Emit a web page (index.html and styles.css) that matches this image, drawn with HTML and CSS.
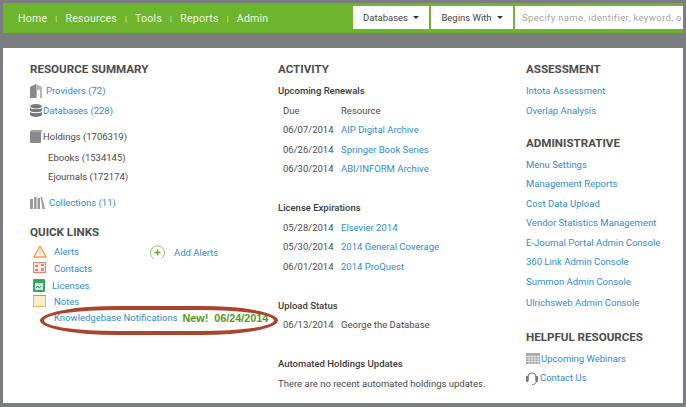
FILE: index.html
```html
<!DOCTYPE html>
<html lang="en">
<head>
    <meta charset="UTF-8">
    <title>Dashboard</title>
    <link rel="stylesheet" href="styles.css">
</head>
<body>
    <div class="frame">
        <header class="topbar">
            <nav class="nav">
                <a>Home</a><span class="sep">|</span>
                <a>Resources</a><span class="sep">|</span>
                <a>Tools</a><span class="sep">|</span>
                <a>Reports</a><span class="sep">|</span>
                <a>Admin</a>
            </nav>
            <div class="search">
                <div class="select select-db">Databases <i class="caret"></i></div>
                <div class="select select-match">Begins With <i class="caret"></i></div>
                <div class="search-input">Specify name, identifier, keyword, o</div>
            </div>
        </header>
        <div class="subbar"></div>
        <main class="content">
            <section class="column">
                <h2>RESOURCE SUMMARY</h2>
                <div class="row row-first">
                    <svg class="icon" width="13" height="14" viewBox="0 0 13 14"><path d="M0 14V3l6-3v14z" fill="#8a8a8a"/><path d="M6 0l6 3v11h-2V7a1.500 1.500 0 0 0-3 0v7H6z" fill="#b5b5b5"/></svg>
                    <a class="icon-gap">Providers (72)</a>
                </div>
                <div class="row">
                    <svg class="icon" width="12" height="13" viewBox="0 0 12 13"><ellipse cx="6" cy="2.200" rx="6" ry="2.200" fill="#777"/><path d="M0 4c1 1.600 11 1.600 12 0v2.500c-1 2.300-11 2.300-12 0zM0 8c1 1.600 11 1.600 12 0v2.800c-1 2.800-11 2.800-12 0z" fill="#777"/></svg>
                    <a>Databases (228)</a>
                </div>
                <div class="row row-holdings">
                    <svg class="icon" width="12" height="13" viewBox="0 0 12 13"><rect y="1" width="11" height="12" rx="1" fill="#8a8a8a"/><rect x="1" width="11" height="2" fill="#a5a5a5"/></svg>
                    <span>Holdings (1706319)</span>
                </div>
                <div class="row row-sub row-ebooks">Ebooks (1534145)</div>
                <div class="row row-sub">Ejournals (172174)</div>
                <div class="row row-collections">
                    <svg class="icon" width="15" height="12" viewBox="0 0 15 12"><path d="M0 2h3v10H0zM4 0h2.500v12H4zM7.500 1H10v11H7.500zM10.500 0l1.500 0L15 12h-2.500z" fill="#9a9a9a"/></svg>
                    <a class="collections">Collections (11)</a>
                </div>
                <h2 class="quick-title">QUICK LINKS</h2>
                <div class="quick">
                    <div class="quick-list">
                        <div class="quick-row">
                            <svg class="quick-icon" width="14" height="13" viewBox="0 0 14 13"><path d="M7 1 1 12h12z" fill="#fff" stroke="#f2a04e" stroke-width="1.500"/><path d="M7 5v4M7 10v1" stroke="#f2a04e"/></svg>
                            <a>Alerts</a>
                        </div>
                        <div class="quick-row">
                            <svg class="quick-icon" width="14" height="12" viewBox="0 0 14 12"><rect x=".5" y=".5" width="12" height="10" fill="#fbeae4" stroke="#e8836c"/><path d="M2 3h3v2H2zM8 2h3v2H8zM2 7h3v2H2zM8 6h3v3H8z" fill="#e8836c"/></svg>
                            <a>Contacts</a>
                        </div>
                        <div class="quick-row quick-licenses">
                            <svg class="quick-icon" width="12" height="13" viewBox="0 0 12 13"><rect width="12" height="13" rx="1" fill="#3ba568"/><rect x="2" y="4" width="8" height="7" fill="#cfe6d6"/><path d="M3 9l2-2 1 2 2-2" stroke="#3ba568" fill="none"/></svg>
                            <a>Licenses</a>
                        </div>
                        <div class="quick-row quick-notes">
                            <svg class="quick-icon" width="13" height="12" viewBox="0 0 13 12"><rect x=".5" y=".5" width="12" height="11" fill="#fbeec4" stroke="#f0b565"/><path d="M0 .5h13" stroke="#e8902c"/></svg>
                            <a>Notes</a>
                        </div>
                        <div class="quick-row kb">
                            <a>Knowledgebase Notifications</a>
                            <b class="new">New!&nbsp; 06/24/2014</b>
                        </div>
                    </div>
                    <div class="add-alerts">
                        <svg width="15" height="15" viewBox="0 0 15 15"><path d="M3.500 13.500a7 7 0 1 1 8 0" fill="none" stroke="#8cc063"/><path d="M7.500 4.500v6M4.500 7.500h6" stroke="#5fa52e" stroke-width="1.400"/></svg>
                        <a>Add Alerts</a>
                    </div>
                </div>
            </section>
            <section class="column">
                <h2>ACTIVITY</h2>
                <h3 class="row-first">Upcoming Renewals</h3>
                <div class="table-row head"><span class="cell-date">Due</span><span>Resource</span></div>
                <div class="table-row first-data"><span class="cell-date">06/07/2014</span><a>AIP Digital Archive</a></div>
                <div class="table-row"><span class="cell-date">06/26/2014</span><a>Springer Book Series</a></div>
                <div class="table-row"><span class="cell-date">06/30/2014</span><a>ABI/INFORM Archive</a></div>
                <h3 class="block-title">License Expirations</h3>
                <div class="table-row"><span class="cell-date">05/28/2014</span><a>Elsevier 2014</a></div>
                <div class="table-row"><span class="cell-date">05/30/2014</span><a>2014 General Coverage</a></div>
                <div class="table-row"><span class="cell-date">06/01/2014</span><a>2014 ProQuest</a></div>
                <h3 class="block-title">Upload Status</h3>
                <div class="table-row"><span class="cell-date">06/13/2014</span><span>George the Database</span></div>
                <h3 class="block-title">Automated Holdings Updates</h3>
                <p class="note">There are no recent automated holdings updates.</p>
            </section>
            <section class="column">
                <h2>ASSESSMENT</h2>
                <div class="row row-first"><a>Intota Assessment</a></div>
                <div class="row"><a>Overlap Analysis</a></div>
                <h2 class="admin-title">ADMINISTRATIVE</h2>
                <div class="row row-first"><a>Menu Settings</a></div>
                <div class="row"><a>Management Reports</a></div>
                <div class="row"><a>Cost Data Upload</a></div>
                <div class="row"><a>Vendor Statistics Management</a></div>
                <div class="row"><a>E-Journal Portal Admin Console</a></div>
                <div class="row"><a>360 Link Admin Console</a></div>
                <div class="row"><a>Summon Admin Console</a></div>
                <div class="row row-last"><a>Ulrichsweb Admin Console</a></div>
                <h2 class="helpful-title">HELPFUL RESOURCES</h2>
                <div class="row row-webinars">
                    <svg class="icon" width="14" height="11" viewBox="0 0 14 11"><rect width="14" height="11" fill="#a8a8a8"/><path d="M0 3.500h14M0 6h14M0 8.500h14M3 2v9M6 2v9M9 2v9M12 2v9" stroke="#efefef" stroke-width=".7"/></svg>
                    <a>Upcoming Webinars</a>
                </div>
                <div class="row">
                    <svg class="icon" width="12" height="13" viewBox="0 0 12 13"><path d="M2 8V5a4 4 0 0 1 8 0v3" fill="none" stroke="#777" stroke-width="1.200"/><rect x="0" y="4" width="2.500" height="6" rx="1" fill="#777"/><rect x="9.500" y="4" width="2.500" height="6" rx="1" fill="#777"/><path d="M10 10c0 2-2 2.500-4 2.500" fill="none" stroke="#777"/></svg>
                    <a class="contact">Contact Us</a>
                </div>
            </section>
            <div class="circle"></div>
        </main>
    </div>
</body>
</html>
```

FILE: styles.css
```css
* {
    box-sizing: border-box;
}

body {
    margin: 0;
    background-color: #7c7d80;
    font-family: Roboto, "Liberation Sans", sans-serif;
    font-size: 9.5px;
    color: #4a4a4a;
}

a {
    color: #2f8ccd;
}

.frame {
    width: 686px;
    height: 407px;
    padding: 3px 3px 4px 3px;
    overflow: hidden;
}

.topbar {
    display: flex;
    justify-content: space-between;
    align-items: center;
    height: 30px;
    background-color: #6cb52d;
}

.nav {
    display: flex;
    align-items: center;
    padding-left: 15px;
    font-size: 10.5px;
    letter-spacing: 0.25px;
}

.nav a {
    color: #eef7e6;
}

.sep {
    margin: 0 8px 0 8px;
    color: #dcefc9;
    font-size: 8px;
}

.search {
    display: flex;
    gap: 2px;
    margin-bottom: 1px;
}

.select {
    display: flex;
    align-items: center;
    justify-content: center;
    gap: 5px;
    height: 23px;
    background-color: #fff;
    color: #444;
}

.select-db {
    width: 76px;
}

.select-match {
    width: 82px;
}

.caret {
    border-left: 3px solid transparent;
    border-right: 3px solid transparent;
    border-top: 3px solid #333;
}

.search-input {
    width: 168px;
    height: 23px;
    line-height: 23px;
    padding-left: 7px;
    background-color: #fff;
    color: #a5a5a5;
    letter-spacing: 0.35px;
    white-space: nowrap;
    overflow: hidden;
}

.subbar {
    height: 15px;
}

.content {
    position: relative;
    display: grid;
    grid-template-columns: 248px 248px 1fr;
    height: 355px;
    padding: 14px 0 0 27px;
    background-color: #fff;
}

h2 {
    margin: 0;
    height: 14px;
    line-height: 14px;
    font-size: 11.6px;
    font-weight: 700;
    color: #4d4d4d;
}

h3 {
    margin: 0;
    height: 14px;
    line-height: 14px;
    font-size: 9.5px;
    font-weight: 500;
    color: #3a3a3a;
}

.row,
.table-row {
    display: flex;
    align-items: center;
    height: 14px;
    line-height: 14px;
    margin-top: 5.5px;
    white-space: nowrap;
}

.row-first {
    margin-top: 8px;
}

.icon {
    flex: none;
    margin-right: 1px;
}

.icon-gap {
    margin-left: 2px;
}

.contact {
    margin-left: 1px;
}

.row-holdings {
    margin-top: 12px;
}

.row-sub {
    padding-left: 18px;
}

.row-ebooks {
    margin-top: 7px;
}

.row-collections {
    margin-top: 12px;
}

.collections {
    margin-left: 3px;
}

.quick-title {
    margin-top: 15px;
}

.quick {
    display: flex;
}

.quick-list {
    width: 120px;
    padding: 3px 0 0 3px;
}

.quick-row {
    display: flex;
    align-items: center;
    height: 14px;
    margin-top: 2.5px;
    white-space: nowrap;
}

.quick-icon {
    flex: none;
    margin-right: 7px;
}

.quick-licenses {
    margin-top: 3.5px;
}

.quick-notes {
    margin-top: 1.5px;
}

.quick-notes .quick-icon {
    margin-right: 8px;
}

.kb {
    padding-left: 21px;
}

.new {
    margin-left: 5px;
    color: #4f9a1c;
    font-family: "Liberation Sans", sans-serif;
    font-size: 10.8px;
}

.add-alerts {
    display: flex;
    align-items: center;
    gap: 9px;
    height: 15px;
    margin-top: 6px;
}

.table-row {
    padding-left: 5px;
}

.cell-date {
    width: 58px;
}

.table-row.head {
    margin-top: 6px;
}

.table-row.first-data {
    margin-top: 5px;
}

.block-title {
    margin-top: 25px;
}

.note {
    margin: 5.5px 0 0;
    line-height: 14px;
    white-space: nowrap;
}

.admin-title {
    margin-top: 18px;
}

.row-last {
    margin-top: 7px;
}

.helpful-title {
    margin-top: 20px;
}

.row-webinars {
    margin-top: 8px;
}

.circle {
    position: absolute;
    left: 37px;
    top: 258px;
    width: 238px;
    height: 29px;
    border: 4px solid #a8452c;
    border-radius: 80px / 15px;
}
```
